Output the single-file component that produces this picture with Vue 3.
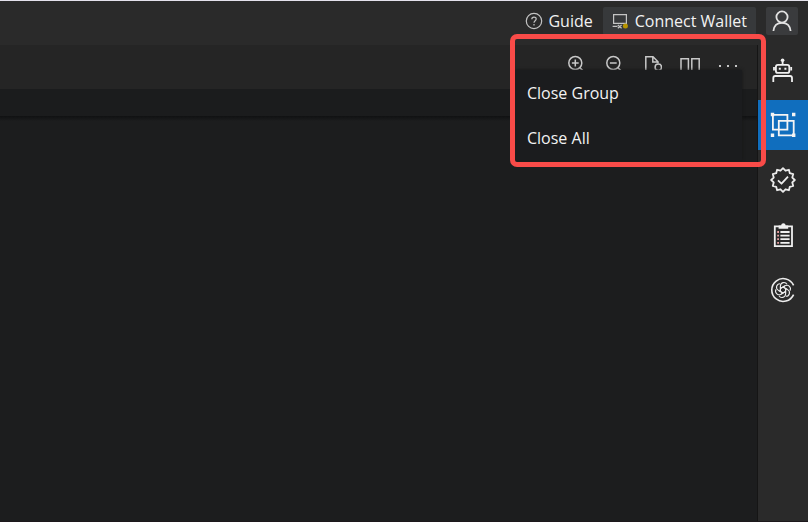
<script setup>
import { ref } from 'vue'

const views = ['Assistant', 'Compare', 'Verify', 'Checklist', 'AI chat']
const active = ref('Compare')
const menu = ['Close Group', 'Close All']

// Twelve-pointed badge outline centred in a 26-unit box.
const badge = Array.from({ length: 24 }, (_, i) => {
  const radius = i % 2 ? 9.6 : 11.8
  const angle = (i * Math.PI) / 12
  return `${(13 + radius * Math.sin(angle)).toFixed(2)},${(13 - radius * Math.cos(angle)).toFixed(2)}`
}).join(' ')
</script>

<template>
  <div class="app">
    <header class="titlebar">
      <a class="guide" href="#guide">
        <svg width="18" height="18" viewBox="0 0 18 18" fill="none" stroke="#c4c4c4" stroke-width="1.2">
          <circle cx="9" cy="9" r="7.7" />
          <path d="M6.8 7.2C6.8 4.4 11.2 4.4 11.2 7.1C11.2 8.8 9 8.8 9 10.8M9 12v1.5" />
        </svg>
        <span>Guide</span>
      </a>
      <button class="wallet" type="button">
        <svg width="18" height="16" viewBox="0 0 18 16" fill="none" stroke="#c4c4c4" stroke-width="1.2">
          <path d="M1.6 10.4V1.6H14.4V10.4Z" />
          <path d="M.6 13.4H5.4M5.8 15.2L9.6 12M5.8 12L9.6 15.2" />
          <circle cx="13.4" cy="13" r="2.5" fill="#b89500" stroke="none" />
        </svg>
        <span>Connect Wallet</span>
      </button>
      <button class="user" type="button" aria-label="Account">
        <svg width="20" height="22" viewBox="0 0 20 22" fill="none" stroke="#e2e2e2" stroke-width="1.8">
          <circle cx="10" cy="7" r="5.6" />
          <path d="M1.4 21C1.9 15.8 5.2 12.8 10 12.8S18.1 15.8 18.6 21" />
        </svg>
      </button>
    </header>

    <div class="body">
      <main class="editor">
        <div class="toolbar">
          <button type="button" aria-label="Zoom in">
            <svg width="20" height="20" viewBox="0 0 20 20" fill="none" stroke="#c8c8c8" stroke-width="1.5">
              <circle cx="9.3" cy="8" r="6.5" />
              <path d="M5.9 8H12.7M9.3 4.6V11.4M13.8 12.6L18 16.8" />
            </svg>
          </button>
          <button type="button" aria-label="Zoom out">
            <svg width="20" height="20" viewBox="0 0 20 20" fill="none" stroke="#c8c8c8" stroke-width="1.5">
              <circle cx="9.3" cy="8" r="6.5" />
              <path d="M5.9 8H12.7M13.8 12.6L18 16.8" />
            </svg>
          </button>
          <button type="button" aria-label="Preview file">
            <svg width="20" height="20" viewBox="0 0 20 20" fill="none" stroke="#c8c8c8" stroke-width="1.5">
              <path d="M9 17.5H3.8V1.7H11L16 6.7V8.3M10.8 2V7H15.6" />
              <circle cx="16.3" cy="12.3" r="3.2" />
              <path d="M14.2 14.4L11.5 17.4" />
            </svg>
          </button>
          <button type="button" aria-label="Split editor">
            <svg width="20" height="20" viewBox="0 0 20 20" fill="none" stroke="#c8c8c8" stroke-width="1.5">
              <path d="M1 3.7H8.4V17.5H1ZM11.8 3.7H19.2V17.5H11.8Z" />
            </svg>
          </button>
          <button type="button" aria-label="More actions">
            <svg width="20" height="20" viewBox="0 0 20 20" fill="#c8c8c8">
              <path d="M1 10h2v2H1zM9 10h2v2H9zM17 10h2v2h-2z" />
            </svg>
          </button>
        </div>
        <div class="crumbs"></div>
        <div class="canvas"></div>
      </main>

      <nav class="activity" aria-label="Views">
        <button
          v-for="view in views"
          :key="view"
          type="button"
          :class="{ active: view === active }"
          :aria-label="view"
          @click="active = view"
        >
          <svg v-if="view === 'Assistant'" width="26" height="26" viewBox="0 0 26 26" fill="none" stroke="#f0f0f0" stroke-width="1.8">
            <path d="M12.6 4V8" />
            <circle cx="12.6" cy="3.3" r="1.8" fill="#f0f0f0" stroke="none" />
            <rect x="5.9" y="7.9" width="13.4" height="8" rx="2" />
            <path d="M4 10V13.6M21.2 10V13.6M3.3 25V21C3.3 19.8 4 19 5.3 19H20C21.3 19 22 19.8 22 21V25" />
            <path d="M8.8 10.8h2v2h-2zM14.4 10.8h2v2h-2z" fill="#f0f0f0" stroke="none" />
          </svg>
          <svg v-else-if="view === 'Compare'" width="26" height="26" viewBox="0 0 26 26" fill="none" stroke="#f4f4f4" stroke-width="1.8">
            <path d="M2.9 2.9H17.4V17.6H2.9ZM8.8 8.8H23.7V23.4H8.8Z" />
            <path d="M.8.8h3.4v3.4H.8zM22 .8h3.4v3.4H22zM.8 21.6h3.4V25H.8zM22 21.6h3.4V25H22z" fill="#f4f4f4" stroke="none" />
          </svg>
          <svg v-else-if="view === 'Verify'" width="26" height="26" viewBox="0 0 26 26" fill="none" stroke="#ececec" stroke-width="1.8" stroke-linejoin="round">
            <polygon :points="badge" />
            <path d="M8 13.4L11.5 16.7L18 9.7" />
          </svg>
          <svg v-else-if="view === 'Checklist'" width="26" height="26" viewBox="0 0 26 26" fill="none" stroke="#f0f0f0" stroke-width="1.8">
            <path d="M4.8 4.4H22V24.2H4.8Z" />
            <path d="M8.6 6.8V3.4H11.2C11.2.4 15.6.4 15.6 3.4H18.2V6.8Z" fill="#f0f0f0" stroke="none" />
            <path d="M10.4 10H19.6M10.4 13.6H19.6M10.4 17.2H19.6M10.4 20.8H19.6" />
            <path d="M7.2 10H9M7.2 13.6H9M7.2 17.2H9M7.2 20.8H9" stroke="#e8a0a0" />
          </svg>
          <svg v-else width="26" height="26" viewBox="0 0 26 26" fill="none" stroke="#ececec" stroke-width="1.6">
            <path d="M23.6 8.4A11.4 11.4 0 1 0 23.6 17.6" />
            <g stroke-width="1.1" stroke-linejoin="round">
              <path
                v-for="n in 6"
                :key="n"
                :transform="`rotate(${n * 60} 13 13)`"
                d="M10.4 14.5V9.2C10.4 5.2 15.3 4.3 17 7.3M10.4 11.5L14.8 9"
              />
            </g>
          </svg>
        </button>
      </nav>
    </div>

    <ul class="menu">
      <li v-for="item in menu" :key="item"><button type="button">{{ item }}</button></li>
    </ul>
    <div class="highlight"></div>
  </div>
</template>

<style>
body {
  background: #1c1d1e;
}
</style>

<style scoped>
.app {
  position: relative;
  display: flex;
  flex-direction: column;
  box-sizing: border-box;
  min-height: 100vh;
  border-top: 1px solid #e4e2ec;
  border-bottom: 1px solid #1d181c;
  background: #1c1d1e;
  color: #f2f2f2;
  font: 16px/24px "Open Sans", "Noto Sans", sans-serif;
}
button {
  display: flex;
  align-items: center;
  justify-content: center;
  padding: 0;
  border: 0;
  background: none;
  color: inherit;
  font: inherit;
}
svg {
  flex: none;
}
.titlebar {
  display: flex;
  align-items: center;
  justify-content: flex-end;
  box-sizing: border-box;
  height: 44px;
  padding: 0 10px 4px;
  background: #2a2a2a;
}
.guide {
  display: flex;
  align-items: center;
  gap: 5px;
  margin-right: 10px;
  color: inherit;
  text-decoration: none;
}
.wallet {
  gap: 5px;
  height: 28px;
  padding: 0 9px;
  margin-right: 10px;
  border-radius: 2px;
  background: #37393b;
}
.user {
  width: 32px;
  height: 28px;
  border-radius: 2px;
  background: #3a3b3d;
}
.body {
  display: flex;
  flex: 1;
}
.editor {
  display: flex;
  flex: 1;
  flex-direction: column;
  border-right: 1px solid #151515;
}
.toolbar {
  display: flex;
  align-items: center;
  justify-content: flex-end;
  gap: 18px;
  box-sizing: border-box;
  height: 44px;
  padding: 0 19px 4px 0;
  background: #252525;
}
.crumbs {
  height: 27px;
  background: #1b1c1d;
}
.canvas {
  flex: 1;
  background: linear-gradient(#101112, #1c1d1e 5px);
}
.activity {
  display: flex;
  flex-direction: column;
  gap: 5px;
  width: 50px;
  background: #2a2a2a;
}
.activity button {
  height: 50px;
}
.activity .active {
  background: #106ebe;
}
.menu {
  position: absolute;
  top: 69px;
  right: 66px;
  width: 227px;
  margin: 0;
  padding: 0;
  background: #1b1c1e;
  box-shadow: 0 0 3px #151617;
  list-style: none;
}
.menu button {
  justify-content: flex-start;
  width: 100%;
  height: 45px;
  padding: 0 12px;
}
.highlight {
  position: absolute;
  top: 33px;
  right: 42px;
  box-sizing: border-box;
  width: 256px;
  height: 133px;
  border: 5px solid #f94b48;
  border-radius: 7px;
  pointer-events: none;
}
</style>
